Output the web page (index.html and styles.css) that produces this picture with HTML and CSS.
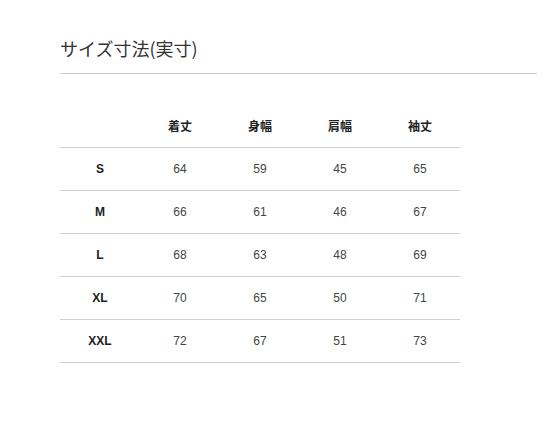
FILE: index.html
```html
<!DOCTYPE html>
<html lang="ja">
<head>
<meta charset="utf-8">
<link rel="stylesheet" href="styles.css">
</head>
<body>
<div class="page">
  <h2 class="title">サイズ寸法(実寸)</h2>
  <table class="size">
    <thead>
      <tr><th></th><th>着丈</th><th>身幅</th><th>肩幅</th><th>袖丈</th></tr>
    </thead>
    <tbody>
      <tr><th>S</th><td>64</td><td>59</td><td>45</td><td>65</td></tr>
      <tr><th>M</th><td>66</td><td>61</td><td>46</td><td>67</td></tr>
      <tr><th>L</th><td>68</td><td>63</td><td>48</td><td>69</td></tr>
      <tr><th>XL</th><td>70</td><td>65</td><td>50</td><td>71</td></tr>
      <tr><th>XXL</th><td>72</td><td>67</td><td>51</td><td>73</td></tr>
    </tbody>
  </table>
</div>
</body>
</html>
```

FILE: styles.css
```css
html, body {
  margin: 0;
  padding: 0;
  background: #fff;
}
.page {
  padding: 0 0 0 60px;
  font-family: "Liberation Sans", "Noto Sans CJK JP", sans-serif;
  color: #333;
}
.title {
  margin: 0;
  width: 477px;
  height: 74px;
  box-sizing: border-box;
  padding-top: 36px;
  border-bottom: 1px solid #c8c8c8;
  font-family: "Noto Sans CJK JP", sans-serif;
  font-weight: normal;
  font-size: 18px;
  line-height: 24px;
  color: #333;
}
.size {
  margin-top: 29px;
  border-collapse: collapse;
  width: 400px;
  table-layout: fixed;
}
.size th, .size td {
  width: 80px;
  padding: 0;
  text-align: center;
  border-bottom: 1px solid #d0d0d0;
}
.size thead th {
  height: 44px;
  font-family: "Noto Sans CJK JP", sans-serif;
  font-weight: bold;
  font-size: 12px;
  color: #222;
  vertical-align: middle;
}
.size tbody th, .size tbody td {
  height: 42px;
}
.size tbody th {
  font-weight: bold;
  font-size: 12px;
  color: #222;
}
.size tbody td {
  font-size: 12px;
  color: #444;
}
```
